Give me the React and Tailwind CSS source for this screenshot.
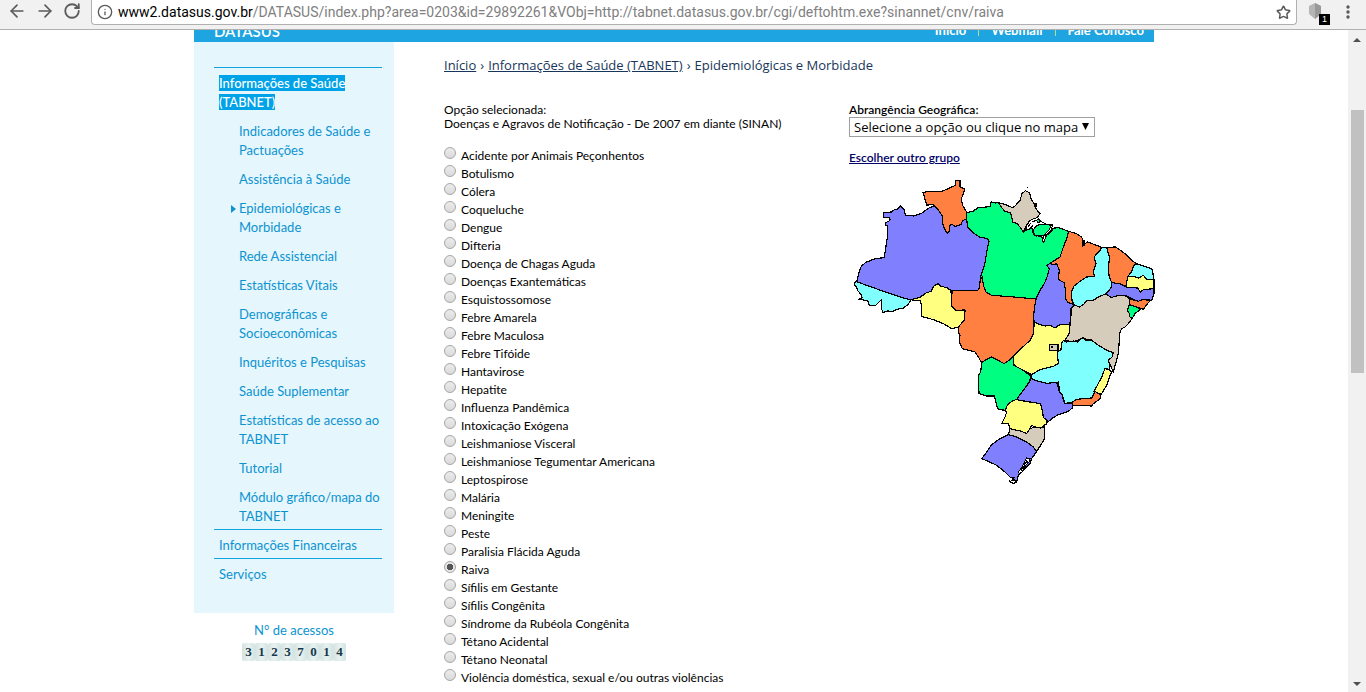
import React from "react";
import { ArrowLeft, ArrowRight, Info, RotateCw, Star } from "lucide-react";

const subItems = [
  "Indicadores de Saúde e Pactuações",
  "Assistência à Saúde",
  "Epidemiológicas e Morbidade",
  "Rede Assistencial",
  "Estatísticas Vitais",
  "Demográficas e Socioeconômicas",
  "Inquéritos e Pesquisas",
  "Saúde Suplementar",
  "Estatísticas de acesso ao TABNET",
  "Tutorial",
  "Módulo gráfico/mapa do TABNET",
];

const diseases = [
  "Acidente por Animais Peçonhentos",
  "Botulismo",
  "Cólera",
  "Coqueluche",
  "Dengue",
  "Difteria",
  "Doença de Chagas Aguda",
  "Doenças Exantemáticas",
  "Esquistossomose",
  "Febre Amarela",
  "Febre Maculosa",
  "Febre Tifóide",
  "Hantavirose",
  "Hepatite",
  "Influenza Pandêmica",
  "Intoxicação Exógena",
  "Leishmaniose Visceral",
  "Leishmaniose Tegumentar Americana",
  "Leptospirose",
  "Malária",
  "Meningite",
  "Peste",
  "Paralisia Flácida Aguda",
  "Raiva",
  "Sífilis em Gestante",
  "Sífilis Congênita",
  "Síndrome da Rubéola Congênita",
  "Tétano Acidental",
  "Tétano Neonatal",
  "Violência doméstica, sexual e/ou outras violências",
];

const PURPLE = "#8080ff";
const CYAN = "#80ffff";
const YELLOW = "#ffff80";
const ORANGE = "#ff8040";
const GREEN = "#00ff80";
const STONE = "#d5ccbb";

const states = [
  ["AM", PURPLE, "100,112 125,110 133,103 143,101 152,92 162,103 166,119 190,122 215,114 235,99 254,91 265,104 277,122 279,148 286,166 293,174 299,166 299,150 306,147 315,153 325,151 333,147 338,135 350,132 353,155 370,173 388,185 412,190 417,198 411,225 405,262 397,290 391,312 388,338 383,346 306,346 290,337 270,332 265,325 252,332 243,348 228,353 210,366 183,373 160,368 100,348 20,319 26,295 34,272 48,261 75,250 103,247 106,225 113,180 113,150 107,150 106,142 116,138 121,133 116,126 100,127"],
  ["AC", CYAN, "20,319 100,348 160,368 183,373 175,387 160,398 140,402 128,408 112,407 98,412 95,400 95,372 87,380 77,390 58,391 55,378 40,374 25,372 36,367 34,358 23,346 20,335 13,330 15,321"],
  ["RO", YELLOW, "183,373 210,366 228,353 243,348 252,332 265,325 270,332 290,337 303,346 305,392 318,405 345,404 344,432 338,440 325,455 305,460 280,445 250,433 214,423 215,400 212,376 195,375"],
  ["RR", ORANGE, "219,51 240,48 275,48 290,42 316,30 316,16 330,16 330,35 343,40 342,50 334,70 338,90 347,105 350,112 350,132 338,135 333,147 325,151 315,153 306,147 299,150 299,166 293,174 286,166 279,148 277,122 265,104 250,88 230,89"],
  ["PA", GREEN, "350,112 370,107 385,97 420,94 423,80 436,83 446,82 455,97 465,108 482,112 488,140 502,145 512,158 520,170 530,162 548,160 550,178 575,184 580,202 590,180 600,172 610,160 622,156 640,162 656,168 650,190 640,215 630,245 600,264 590,270 598,280 593,300 583,325 570,345 558,371 480,364 425,360 408,350 400,330 397,312 391,305 397,290 405,262 411,225 417,198 412,190 388,185 370,173 353,155 350,132"],
  ["AP", STONE, "446,82 465,87 487,97 495,92 510,75 516,55 526,46 538,52 545,75 555,88 558,100 570,115 560,128 540,135 528,152 520,170 512,158 502,145 488,140 482,112 465,108 455,97"],
  ["MA", ORANGE, "656,168 680,175 695,185 700,198 698,212 712,200 735,208 755,216 750,225 732,245 738,265 730,290 733,303 710,305 690,318 672,332 664,350 666,375 672,388 655,382 646,370 646,340 642,322 625,312 628,285 620,265 610,268 600,264 630,245 640,215 650,190"],
  ["PI", CYAN, "755,216 770,216 773,230 779,245 775,275 777,300 785,318 783,338 768,355 745,365 730,375 712,375 700,388 688,395 672,388 666,375 664,350 672,332 690,318 710,305 733,303 730,290 738,265 732,245 750,225"],
  ["CE", ORANGE, "770,216 797,215 825,235 845,255 860,265 850,272 845,290 833,305 828,333 810,325 785,322 777,300 775,275 779,245 773,230"],
  ["RN", CYAN, "860,265 880,272 905,280 908,290 912,312 890,312 880,300 865,308 850,303 833,303 845,290 850,272"],
  ["PB", YELLOW, "833,303 850,303 865,308 880,300 890,312 912,312 912,340 895,342 880,343 872,352 862,340 828,335"],
  ["PE", PURPLE, "785,322 810,325 828,335 862,338 872,350 880,343 912,340 912,355 905,375 880,372 865,378 845,370 830,362 805,360 783,367 768,355 783,338"],
  ["BA", STONE, "672,388 688,395 700,388 712,375 730,375 745,365 768,355 783,367 805,360 830,362 838,370 838,388 832,405 838,415 840,425 846,430 835,445 825,455 815,460 810,470 808,495 805,535 790,590 775,555 790,535 775,527 745,510 700,487 670,500 645,495 657,475 660,450 665,400"],
  ["AL", ORANGE, "838,370 865,378 880,372 900,376 890,388 880,402 860,395 840,388"],
  ["SE", GREEN, "838,388 860,395 870,403 855,415 846,430 840,425 838,415 832,405"],
  ["TO", PURPLE, "600,264 590,270 598,280 593,300 583,325 570,345 558,371 553,400 550,430 553,440 570,448 585,452 600,450 615,458 625,450 640,447 655,448 662,440 662,400 672,388 655,382 646,370 646,340 642,322 625,312 628,285 620,265 610,268"],
  ["GO", YELLOW, "553,440 570,448 585,452 600,450 615,458 625,450 640,447 655,448 660,450 657,475 645,495 635,503 633,523 622,530 625,565 610,573 570,583 545,598 520,585 492,570 490,543 510,523 540,495 550,475"],
  ["MT", ORANGE, "306,346 383,346 388,338 391,312 397,305 400,330 408,350 425,360 480,364 558,371 553,400 550,430 552,440 550,475 540,495 510,523 490,543 480,553 462,565 445,555 425,545 410,552 395,562 385,545 375,530 345,522 337,520 328,500 330,480 325,470 325,455 338,440 344,432 345,404 318,405 305,392"],
  ["MS", GREEN, "395,562 410,552 425,545 445,555 462,565 480,553 490,543 492,570 520,585 543,603 538,620 520,645 500,672 485,678 472,690 465,705 445,702 440,690 433,662 410,662 387,655 385,600 392,590"],
  ["SP", PURPLE, "543,610 565,618 590,624 620,620 628,650 635,655 642,680 667,685 667,698 655,708 625,718 605,730 592,742 580,730 578,710 572,685 540,680 510,675 500,672 520,645 538,620"],
  ["MG", CYAN, "545,598 570,583 610,573 625,565 622,530 633,523 635,503 640,495 650,500 670,497 682,500 697,487 706,494 724,494 745,510 775,527 790,532 786,545 775,555 780,570 777,582 765,580 755,605 742,630 735,648 725,668 680,672 667,682 645,684 635,655 628,650 626,620 590,624 565,618 545,610"],
  ["ES", YELLOW, "765,580 777,582 785,590 780,600 770,630 755,655 745,655 732,648 742,630 755,605"],
  ["RJ", ORANGE, "735,648 745,655 753,657 750,670 730,685 725,692 700,690 667,690 667,680 680,672 725,668"],
  ["PR", YELLOW, "500,672 510,675 540,680 572,685 578,710 580,727 592,735 590,745 572,758 555,755 545,750 540,760 530,775 515,768 480,760 475,745 455,745 465,725 470,710 465,705 472,690 485,678"],
  ["SC", STONE, "480,760 515,768 530,775 540,760 555,755 572,758 584,755 584,790 575,805 560,828 550,815 530,800 500,785 475,778"],
  ["RS", PURPLE, "475,778 500,785 530,800 550,815 560,828 545,850 540,865 520,885 505,900 500,920 490,910 480,905 465,890 440,870 415,858 395,850 410,830 425,808 450,790"],
];

function BrazilMap() {
  return (
    <svg
      viewBox="-3 -1 930 945"
      className="block h-[315px] w-[310px]"
      shapeRendering="crispEdges"
      role="img"
      aria-label="Brasil"
    >
      {states.map(([id, fill, points]) => (
        <polygon key={id} points={points} fill={fill} stroke="#000" strokeWidth="3.6" strokeLinejoin="round" />
      ))}
      <path d="M528 152 L542 134 L562 126 L572 138 L590 148 L608 146 L604 164 L588 178 L560 182 L548 170 L546 158 L530 164Z" fill="#fff" stroke="#000" strokeWidth="3" />
      <path d="M552 160 L562 150 L576 146 L604 150 L598 163 L582 180 L556 180 L550 170Z M560 134 L568 132 L570 140 L562 142Z" fill={GREEN} stroke="#000" strokeWidth="3" />
      <path d="M534 154 L542 144 M540 160 L550 148 M548 140 L558 134 M578 198 L580 182 L588 178 M554 86 h6 v8 h-6Z M531 37 h3" fill="none" stroke="#000" strokeWidth="3.6" />
      <path d="M697 196 l6 0 l0 14 l-6 2Z M600 166 l12 -8 l2 -4" stroke="#000" strokeWidth="3" />
      <rect x="598" y="508" width="26" height="18" fill={STONE} stroke="#000" strokeWidth="4" />
      <rect x="603" y="513" width="6" height="6" fill="#000" />
      <path d="M530 848 L540 850 L536 862 L524 872 L518 888 L508 896 L506 888 L516 876 L522 862Z" fill="#fff" stroke="#000" strokeWidth="3" />
      <path d="M526 852 L532 860 L522 866 L526 872 L514 880 L516 888" fill="none" stroke="#000" strokeWidth="3.6" />
      <path d="M480 906 L492 906 L486 914 L498 916 L494 924 L482 922 L478 914" fill="#fff" stroke="#000" strokeWidth="3.6" />
    </svg>
  );
}

function BrowserBar() {
  return (
    <header className="flex h-[30px] shrink-0 items-start border-b border-[#b0b0b0] bg-[#f1f1f1] text-[#5a5a5a]">
      <nav className="flex h-[22px] w-[91px] shrink-0 items-center gap-2 pl-[7px]" aria-label="Navegador">
        <button type="button" aria-label="Voltar"><ArrowLeft size={20} /></button>
        <button type="button" aria-label="Avançar"><ArrowRight size={20} /></button>
        <button type="button" aria-label="Recarregar"><RotateCw size={18} strokeWidth={2.4} /></button>
      </nav>
      <div className="flex h-[25px] min-w-0 flex-1 items-center gap-1 rounded-b-sm border border-t-0 border-[#b0b0b0] bg-white px-[5px]">
        <Info size={16} className="shrink-0" />
        <p className="min-w-0 flex-1 truncate pl-px font-['Roboto','Noto_Sans',sans-serif] text-[14px] leading-5 text-[#808080]">
          <span className="text-black">www2.datasus.gov.br</span>
          /DATASUS/index.php?area=0203&amp;id=29892261&amp;VObj=http://tabnet.datasus.gov.br/cgi/deftohtm.exe?sinannet/cnv/raiva
        </p>
        <button type="button" aria-label="Favoritos"><Star size={15} strokeWidth={2.4} /></button>
      </div>
      <div className="flex w-[69px] shrink-0 items-center justify-between pl-[11px] pr-4 pt-[3px]">
        <button type="button" aria-label="Extensão" className="relative">
          <svg viewBox="0 0 14 17" className="h-[17px] w-[14px]">
            <path d="M7 0 L13 3 V11 L7 16 L1 11 V3Z" fill="#b5b5b5" />
            <path d="M7 0 L13 3 V11 L7 16Z" fill="#999" />
          </svg>
          <span className="absolute -right-2 top-[11px] h-[11px] w-[11px] bg-black font-['Liberation_Sans',sans-serif] text-[9px] leading-[11px] text-white">1</span>
        </button>
        <button type="button" aria-label="Menu">
          <svg viewBox="0 0 4 16" className="h-4 w-1" fill="#5a5a5a">
            <circle cx="2" cy="3" r="1.7" /><circle cx="2" cy="8" r="1.7" /><circle cx="2" cy="13" r="1.7" />
          </svg>
        </button>
      </div>
    </header>
  );
}

function Sidebar() {
  return (
    <aside className="w-[200px] shrink-0 text-[13px] leading-[19px] text-[#0c93d0]">
      <nav className="bg-[#e5f6fd] pb-[29px] pl-5 pr-3 pt-[25px]">
        <ul>
          <li className="border-t border-[#0ea5e0] pb-[3px] pl-[5px] pt-1.5">
            <a href="#tabnet" className="font-medium text-white">
              <span className="bg-[#00a2e8]">Informações de Saúde</span>
              <br />
              <span className="bg-[#00a2e8]">(TABNET)</span>
            </a>
            <ul className="-mr-2 flex flex-col gap-2.5 pl-5 pt-2.5">
              {subItems.map((item) => (
                <li key={item} className="relative">
                  {item.startsWith("Epidem") && (
                    <svg viewBox="0 0 5 8" className="absolute -left-2 top-1.5 h-2 w-[5px]" fill="#0c93d0">
                      <path d="M0 0 L5 4 L0 8Z" />
                    </svg>
                  )}
                  <a href="#item">{item}</a>
                </li>
              ))}
            </ul>
          </li>
          <li className="border-t border-[#0ea5e0] pb-[3px] pl-[5px] pt-1.5"><a href="#fin">Informações Financeiras</a></li>
          <li className="border-t border-[#0ea5e0] pl-[5px] pt-1.5"><a href="#serv">Serviços</a></li>
        </ul>
      </nav>
      <p className="pt-2 text-center">N° de acessos</p>
      <div className="mt-[3px] flex justify-center font-['Liberation_Serif',serif] text-[13px] font-bold leading-[18px] text-[#17384a]">
        {"31237014".split("").map((d, i) => (
          <span key={i} className="w-[13px] rounded-xs bg-linear-to-r from-[#d3e4e2] via-[#e9f1f0] to-[#d3e4e2] text-center">{d}</span>
        ))}
      </div>
    </aside>
  );
}

export default function App() {
  return (
    <div className="flex h-screen flex-col overflow-hidden bg-white font-['Lato','Open_Sans',sans-serif] text-black">
      <BrowserBar />
      <div className="flex min-h-0 flex-1">
        <div className="min-w-0 flex-1 overflow-hidden">
          <div className="mx-auto w-full max-w-[960px]">
            <div className="flex h-3 items-end justify-between overflow-hidden bg-[#1ea4e0] pl-5 pr-2.5 text-white">
              <strong className="pb-px text-[15px] font-semibold leading-5">DATASUS</strong>
              <nav className="flex items-end text-[13px] font-bold leading-5">
                <a href="#inicio" className="pb-0.5">Início</a>
                <span className="mx-3 mb-1.5 h-4 w-px bg-[#b5dd8e]" />
                <a href="#webmail" className="pb-0.5">Webmail</a>
                <span className="mx-3 mb-1.5 h-4 w-px bg-[#b5dd8e]" />
                <a href="#fale" className="pb-0.5">Fale Conosco</a>
              </nav>
            </div>
            <div className="flex">
              <Sidebar />
              <main className="min-w-0 flex-1 pl-[50px] pt-3.5 text-[12px] leading-[14px]">
                <nav className="flex gap-1 font-['Open_Sans',sans-serif] text-[13px] leading-[19px] text-[#17365a]" aria-label="Trilha">
                  <a href="#inicio" className="underline">Início</a>
                  <span>›</span>
                  <a href="#tabnet" className="underline">Informações de Saúde (TABNET)</a>
                  <span>›</span>
                  <span>Epidemiológicas e Morbidade</span>
                </nav>
                <form className="flex pt-7">
                  <section className="w-[405px] shrink-0">
                    <p>Opção selecionada:</p>
                    <p>Doenças e Agravos de Notificação - De 2007 em diante (SINAN)</p>
                    <div className="pt-4">
                      {diseases.map((name) => (
                        <label key={name} className="flex h-[18px] items-start gap-[5px]">
                          <input
                            type="radio"
                            name="agravo"
                            defaultChecked={name === "Raiva"}
                            className="h-3 w-3 shrink-0 appearance-none rounded-full border border-[#a6a6a6] bg-linear-to-b from-[#ececec] to-[#dadada] checked:bg-[radial-gradient(circle,#555_0_3px,#e6e6e6_3px)]"
                          />
                          <span className="pt-0.5">{name}</span>
                        </label>
                      ))}
                    </div>
                  </section>
                  <section className="min-w-0">
                    <label htmlFor="abrangencia" className="block font-semibold">Abrangência Geográfica:</label>
                    <div className="relative w-[246px]">
                      <select id="abrangencia" className="block h-5 w-full appearance-none border border-[#a0a0a0] bg-white pl-1 font-['Open_Sans',sans-serif] text-[13px] leading-4">
                        <option>Selecione a opção ou clique no mapa</option>
                      </select>
                      <svg viewBox="0 0 7 7" className="pointer-events-none absolute right-1.5 top-1.5 h-[7px] w-[7px]">
                        <path d="M0 0 H7 L3.5 7Z" />
                      </svg>
                    </div>
                    <a href="#grupo" className="mt-3.5 block font-semibold text-[#000066] underline">Escolher outro grupo</a>
                    <div className="pt-2.5"><BrazilMap /></div>
                  </section>
                </form>
              </main>
            </div>
          </div>
        </div>
        <div className="flex w-[18px] shrink-0 flex-col items-center bg-[#f1f1f1] pt-2" aria-hidden="true">
          <svg viewBox="0 0 8 4" className="h-1 w-2" fill="#505050"><path d="M4 0 L8 4 H0Z" /></svg>
          <div className="mt-[68px] h-[263px] w-[13px] bg-[#c1c1c1]" />
          <svg viewBox="0 0 8 4" className="mb-1.5 mt-auto h-1 w-2" fill="#505050"><path d="M0 0 H8 L4 4Z" /></svg>
        </div>
      </div>
    </div>
  );
}
